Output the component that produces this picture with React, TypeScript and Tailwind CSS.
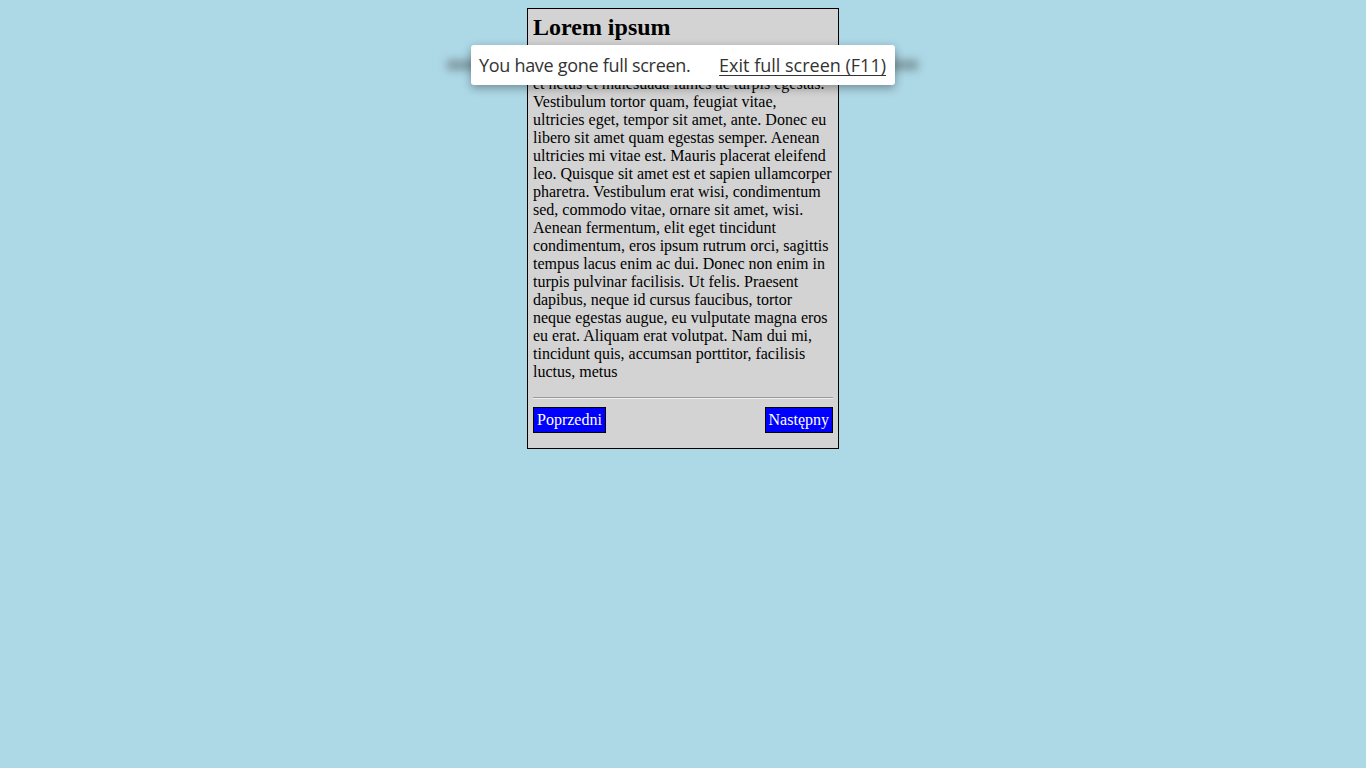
const text =
  "Pellentesque habitant morbi tristique senectus et netus et malesuada fames ac turpis egestas. Vestibulum tortor quam, feugiat vitae, ultricies eget, tempor sit amet, ante. Donec eu libero sit amet quam egestas semper. Aenean ultricies mi vitae est. Mauris placerat eleifend leo. Quisque sit amet est et sapien ullamcorper pharetra. Vestibulum erat wisi, condimentum sed, commodo vitae, ornare sit amet, wisi. Aenean fermentum, elit eget tincidunt condimentum, eros ipsum rutrum orci, sagittis tempus lacus enim ac dui. Donec non enim in turpis pulvinar facilisis. Ut felis. Praesent dapibus, neque id cursus faucibus, tortor neque egestas augue, eu vulputate magna eros eu erat. Aliquam erat volutpat. Nam dui mi, tincidunt quis, accumsan porttitor, facilisis luctus, metus";

export default function App() {
  return (
    <div className="relative min-h-[768px] w-full bg-[#add8e6] pt-2 font-['Liberation_Serif',serif] text-black">
      {/* karta z tekstem */}
      <div className="mx-auto w-[312px] border border-black bg-[#d3d3d3] p-[5px] pb-[15px]">
        <h2 className="mb-[17px] text-[24px] leading-[26px] font-bold">Lorem ipsum</h2>
        <p className="w-[299px] text-[16px] leading-[18px]">{text}</p>
        <hr className="mt-4 mb-[8px] border-t border-b border-t-[#9a9a9a] border-b-[#eeeeee]" />
        <div className="flex justify-between">
          <button className="border border-black bg-[#0000ff] px-[3px] py-[3px] text-[16px] leading-[18px] text-white">
            Poprzedni
          </button>
          <button className="border border-black bg-[#0000ff] px-[3px] py-[3px] text-[16px] leading-[18px] text-white">
            Następny
          </button>
        </div>
      </div>

      {/* komunikat pełnego ekranu */}
      <div className="absolute left-[447px] top-[60px] h-[10px] w-[471px] bg-[#7d98a1] blur-[4px]" />
      <div className="absolute left-[471px] top-[45px] flex h-[40px] w-[424px] items-center justify-between rounded-[3px] bg-white pl-2 pr-[9px] font-['Open_Sans','DejaVu_Sans',sans-serif] text-[18px] text-[#333] shadow-[0_3px_10px_rgba(0,0,0,0.35)]">
        <span className="tracking-[-0.3px]">You have gone full screen.</span>
        <span className="underline underline-offset-[3px]">Exit full screen (F11)</span>
      </div>
    </div>
  );
}
